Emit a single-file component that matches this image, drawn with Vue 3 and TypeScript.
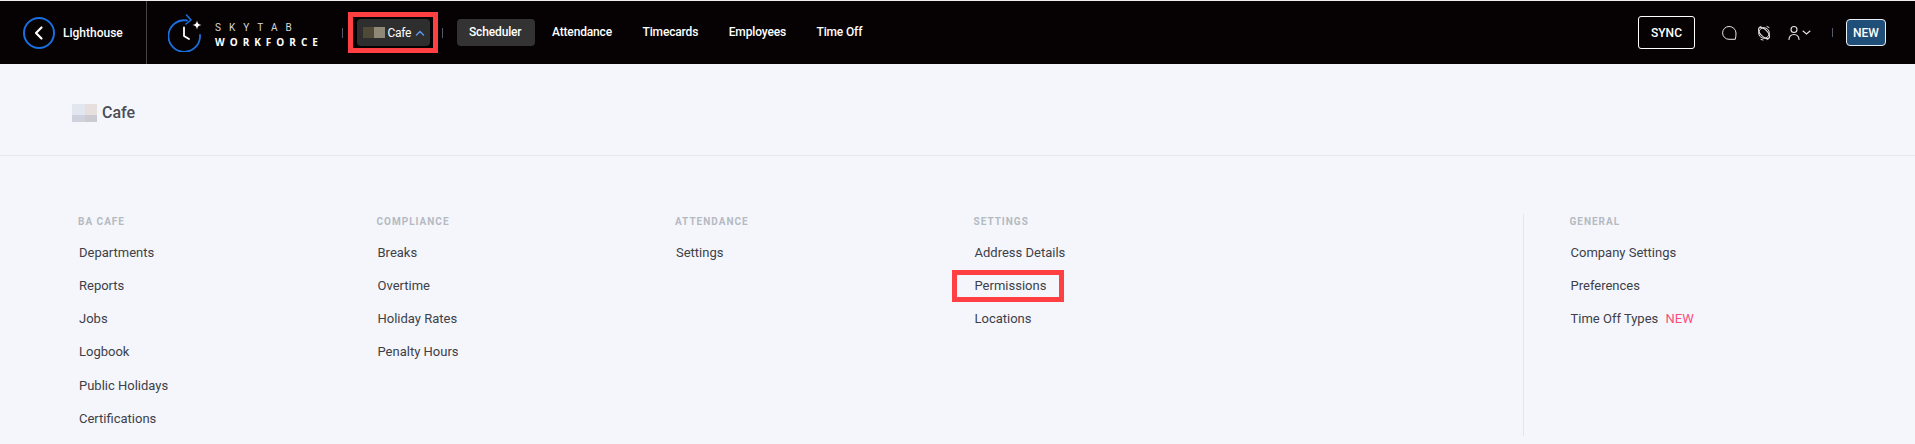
<script setup lang="ts">
interface Col { title: string; items: string[]; width: number; }
const cols: Col[] = [
  { title: 'BA CAFE', width: 298.5, items: ['Departments', 'Reports', 'Jobs', 'Logbook', 'Public Holidays', 'Certifications'] },
  { title: 'COMPLIANCE', width: 298.5, items: ['Breaks', 'Overtime', 'Holiday Rates', 'Penalty Hours'] },
  { title: 'ATTENDANCE', width: 298.5, items: ['Settings'] },
  { title: 'SETTINGS', width: 549, items: ['Address Details', 'Permissions', 'Locations'] },
];
const navLinks = ['Scheduler', 'Attendance', 'Timecards', 'Employees', 'Time Off'];
</script>

<template>
  <div class="page">
    <header class="nav">
      <div class="back">
        <svg class="back-icon" width="32" height="32" viewBox="0 0 32 32" fill="none">
          <circle cx="16" cy="16" r="15" stroke="#1a6fe0" stroke-width="2" />
          <path d="M18.5 10.5 13 16l5.5 5.5" stroke="#fff" stroke-width="2.2" stroke-linecap="round" stroke-linejoin="round" />
        </svg>
        <span class="back-text">Lighthouse</span>
      </div>
      <div class="logo">
        <svg width="36" height="38" viewBox="0 0 36 38" fill="none">
          <path d="M19 6.500A15.800 15.800 0 1 0 32 21" stroke="#1a6fe0" stroke-width="1.800" stroke-linecap="round" />
          <path d="M18.500 1l4.500 5-5 4" stroke="#1a6fe0" stroke-width="1.600" stroke-linecap="round" stroke-linejoin="round" />
          <path d="M16 13.500v8.500l5 3" stroke="#fff" stroke-width="1.800" stroke-linecap="round" stroke-linejoin="round" />
          <path d="M29 6.500c.6 3 1.600 4 4.500 4.500-2.900.5-3.900 1.500-4.500 4.500-.6-3-1.600-4-4.500-4.500 2.900-.5 3.900-1.500 4.500-4.500z" fill="#fff" />
        </svg>
        <div class="logo-text">
          <span class="logo-top">SKYTAB</span>
          <span class="logo-bottom">WORKFORCE</span>
        </div>
      </div>
      <i class="tick tick-a"></i>
      <div class="ring">
        <button class="loc">
          <span class="blur"><b></b><b></b></span>
          <span>Cafe</span>
          <svg width="10" height="6" viewBox="0 0 10 6" fill="none"><path d="M1.500 5 5 1.500 8.500 5" stroke="#5a96e8" stroke-width="1.500" stroke-linecap="round" /></svg>
        </button>
      </div>
      <i class="tick tick-b"></i>
      <nav class="links">
        <a v-for="(l, i) in navLinks" :key="l" class="link" :class="{ active: i === 0 }">{{ l }}</a>
      </nav>
      <div class="right">
        <button class="sync">SYNC</button>
        <svg class="ic-chat" width="16" height="16" viewBox="0 0 16 16" fill="none">
          <path d="M8 1.500a6.300 6.300 0 1 0 0 12.800h6.300c.5-2 .7-4 .7-6.300A6.800 6.800 0 0 0 8 1.500z" stroke="#e6e6e6" stroke-width="1" />
        </svg>
        <svg class="ic-bell" width="16" height="16" viewBox="0 0 16 16" fill="none">
          <circle cx="8" cy="8" r="5.300" stroke="#e6e6e6" stroke-width="1" />
          <ellipse cx="8" cy="8" rx="7" ry="3.500" transform="rotate(45 8 8)" stroke="#e6e6e6" stroke-width="1" />
          <path d="M3 2.500 5 1.500M13 2.500 11 1.500M5 14.500 7 15M11 14.500 13 13.500" stroke="#e6e6e6" stroke-width="1" stroke-linecap="round" />
        </svg>
        <svg class="ic-user" width="24" height="16" viewBox="0 0 24 16" fill="none">
          <circle cx="6" cy="4.500" r="3" stroke="#e6e6e6" stroke-width="1.100" />
          <path d="M1 14.500c0-3 2-5 5-5s5 2 5 5" stroke="#e6e6e6" stroke-width="1.100" stroke-linecap="round" />
          <path d="M15 6l3.500 3L22 6" stroke="#e6e6e6" stroke-width="1.100" stroke-linecap="round" />
        </svg>
        <i class="tick tick-c"></i>
        <button class="new">NEW</button>
      </div>
    </header>

    <section class="title-row">
      <span class="blur light"><b></b><b></b></span>
      <h1>Cafe</h1>
    </section>

    <main class="menu">
      <div v-for="c in cols" :key="c.title" class="col" :style="{ width: c.width + 'px' }">
        <h2>{{ c.title }}</h2>
        <ul>
          <li v-for="it in c.items" :key="it">
            <span :class="{ boxed: it === 'Permissions' }">{{ it }}</span>
          </li>
        </ul>
      </div>
      <div class="col general">
        <h2>GENERAL</h2>
        <ul>
          <li>Company Settings</li>
          <li>Preferences</li>
          <li>Time Off Types <em>NEW</em></li>
        </ul>
      </div>
    </main>
  </div>
</template>

<style>
html, body { margin: 0; background: #f4f6fb; overflow: hidden; }
</style>

<style scoped>
.page { width: 1915px; height: 444px; overflow: hidden; font-family: Roboto, "Liberation Sans", sans-serif; background: #f4f6fb; }
.nav { height: 64px; box-sizing: border-box; border-top: 1px solid #eeeeee; background: #060203; display: flex; align-items: center; color: #fff; font-size: 12px; font-weight: 400; }
.back { width: 147px; height: 63px; border-right: 1px solid #444; display: flex; align-items: center; padding-left: 23px; box-sizing: border-box; }
.back-icon { flex: none; }
.back-text { margin-left: 8px; font-size: 12px; font-weight: 500; }
.logo { display: flex; align-items: center; margin-left: 21px; width: 174px; }
.logo-text { display: flex; flex-direction: column; margin: 5px 0 0 11px; }
.logo-top { font-size: 10px; letter-spacing: 8px; font-weight: 400; line-height: 15px; color: #d8d8d8; }
.logo-bottom { font-size: 10px; font-weight: 700; letter-spacing: 5px; line-height: 15px; font-family: "Open Sans", sans-serif; }
.tick { display: block; width: 1px; height: 10px; background: #555b66; flex: none; }
.ring { border: 5px solid #ff3f42; height: 41px; width: 90px; box-sizing: border-box; margin-left: 5px; display: flex; align-items: center; justify-content: center; }
.loc { width: 73px; height: 27px; background: #2e2e2e; border: 0; border-radius: 4px; color: #fff; font: inherit; font-size: 12px; letter-spacing: -0.3px; display: flex; align-items: center; padding: 0 0 0 6px; gap: 3px; }
.loc svg { margin-left: 1px; }
.blur { display: inline-flex; }
.blur b { display: block; width: 11px; height: 11px; background: #4f4a38; }
.blur b + b { background: #8f8877; }
.tick-b { margin-left: 4px; }
.links { display: flex; align-items: center; margin-left: 14px; }
.link { height: 27px; line-height: 27px; padding: 0 12px; border-radius: 4px; margin-right: 6.500px; font-size: 12px; font-weight: 500; letter-spacing: -0.15px; }
.link.active { background: #333; padding-right: 14px; margin-right: 4.500px; }
.right { margin-left: auto; display: flex; align-items: center; padding-right: 29px; }
.sync { width: 57px; height: 33px; background: transparent; border: 1px solid #fff; border-radius: 3px; color: #fff; font: inherit; font-weight: 500; font-size: 12px; margin-right: 26px; padding: 0; }
.ic-bell { margin-left: 19px; }
.ic-user { margin-left: 16px; }
.tick-c { margin-left: 20px; height: 9px; }
.new { width: 40px; height: 27px; background: #1f4e79; border: 1px solid #e8eef5; border-radius: 4px; color: #fff; font: inherit; font-weight: 500; font-size: 12px; margin-left: 13px; padding: 0; }
.title-row { height: 92px; padding-top: 6px; display: flex; align-items: center; padding-left: 72px; border-bottom: 1px solid #e6e8ec; box-sizing: border-box; }
.blur.light b { width: 12.500px; height: 18px; background: linear-gradient(#e2e6ef 60%, #cfd2dc 60%); }
.blur.light b + b { background: linear-gradient(#e7dfdd 60%, #cbcbd1 60%); }
.title-row h1 { margin: 0 0 0 5px; font-size: 16px; font-weight: 500; color: #4a4d55; }
.menu { display: flex; padding: 60px 0 0 78px; height: 228px; box-sizing: border-box; }
.col { flex: none; }
.col h2 { margin: 0; font-size: 10px; line-height: 12px; font-weight: 700; color: #b4bac2; letter-spacing: 1px; }
.col ul { list-style: none; margin: 14.500px 0 0 1px; padding: 0; }
.col li { height: 33.300px; line-height: 20px; font-size: 13px; color: #3d4048; }
.boxed { display: inline-block; outline: 5px solid #ff3f42; padding: 0 13px 0 18px; margin: -1px -13px 0 -18px; line-height: 22px; }
.general { border-left: 1px solid #e4e6ea; padding-left: 46px; margin-top: -2px; height: 222px; box-sizing: border-box; padding-top: 2px; }
.general em { font-style: normal; color: #ff4b7c; margin-left: 4px; }
</style>
